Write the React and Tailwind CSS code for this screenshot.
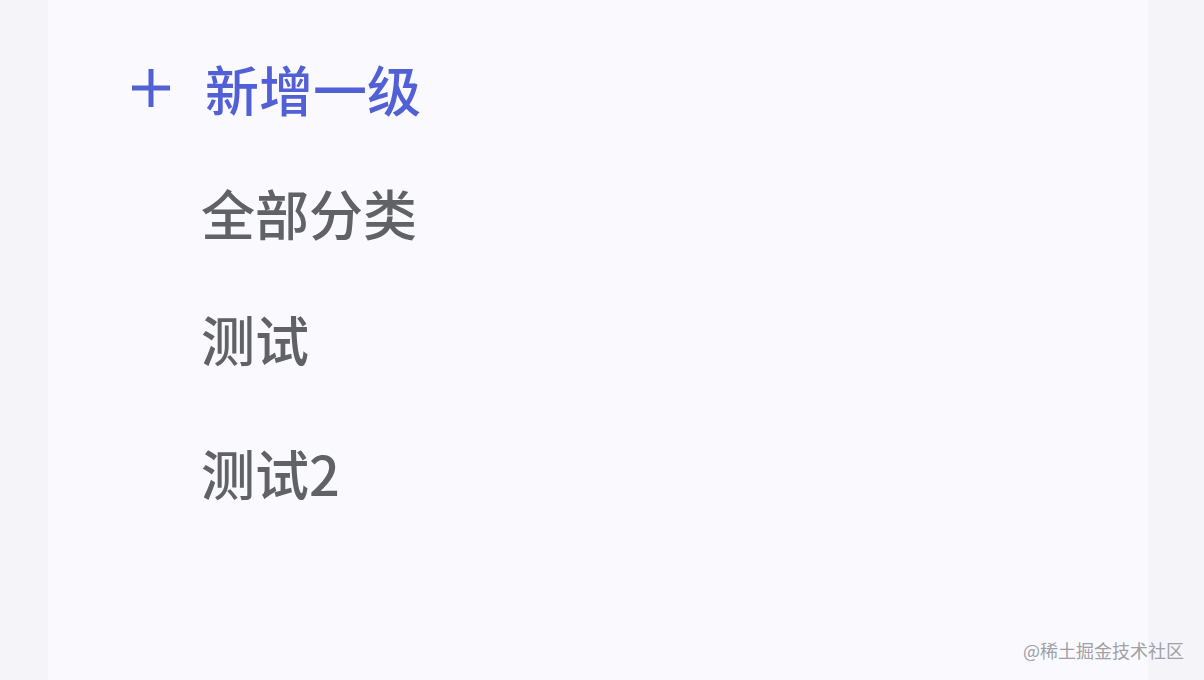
import React from "react"

const items = [
  { label: "全部分类", mt: "mt-[70px]" },
  { label: "测试", mt: "mt-[72px]" },
  { label: "测试2", mt: "mt-[80px]" },
]

export default function App() {
  return (
    <div
      className="relative flex h-[680px] w-[1204px] overflow-hidden bg-[#f5f5f9]"
      style={{ fontFamily: '"Noto Sans CJK SC", "Noto Sans", sans-serif' }}
    >
      <div className="w-[48px] shrink-0" />
      <div className="flex w-[1100px] flex-col bg-[#fafafe] pl-[82px] pt-[62px]">
        <div className="flex items-center text-[54px] font-medium leading-[54px] text-[#5260d6]">
          <svg width="42" height="42" viewBox="0 0 42 42" className="-mt-[2px] shrink-0">
            <path d="M21 2v38M2 21h38" stroke="#5260d6" strokeWidth="5" />
          </svg>
          <span className="ml-[33px]">新增一级</span>
        </div>
        {items.map(it => (
          <div key={it.label} className={`${it.mt} pl-[71px] text-[54px] font-medium leading-[54px] text-[#606266]`}>
            {it.label}
          </div>
        ))}
      </div>
      <div className="flex-1" />
      <div className="absolute bottom-[18px] right-[20px] text-[18px] leading-[24px] text-[#a0a0a6]">
        @稀土掘金技术社区
      </div>
    </div>
  )
}
